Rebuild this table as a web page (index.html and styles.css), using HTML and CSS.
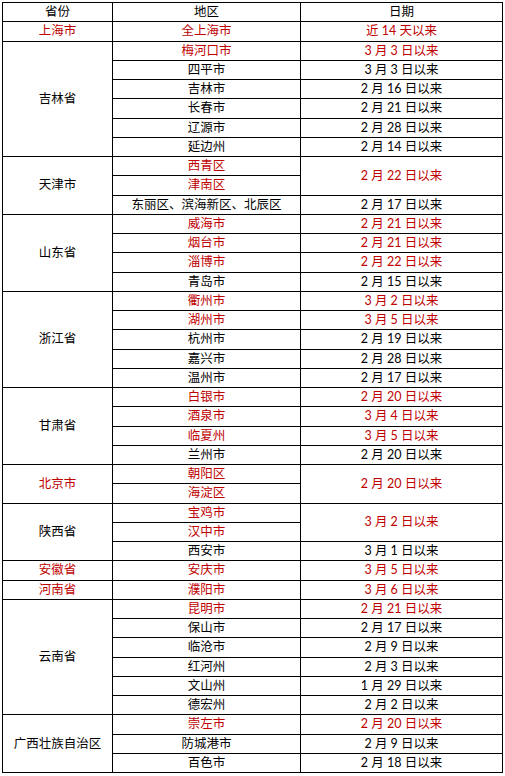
FILE: index.html
```html
<!DOCTYPE html>
<html lang="zh">
<head>
<meta charset="utf-8">
<link rel="stylesheet" href="styles.css">
</head>
<body>
<table class="grid">
<colgroup><col class="c1"><col class="c2"><col class="c3"></colgroup>
<tr><td>省份</td><td>地区</td><td>日期</td></tr>
<tr class="r"><td>上海市</td><td>全上海市</td><td>近 14 天以来</td></tr>
<tr><td rowspan="6">吉林省</td><td class="r">梅河口市</td><td class="r">3 月 3 日以来</td></tr>
<tr><td>四平市</td><td>3 月 3 日以来</td></tr>
<tr><td>吉林市</td><td>2 月 16 日以来</td></tr>
<tr><td>长春市</td><td>2 月 21 日以来</td></tr>
<tr><td>辽源市</td><td>2 月 28 日以来</td></tr>
<tr><td>延边州</td><td>2 月 14 日以来</td></tr>
<tr><td rowspan="3">天津市</td><td class="r">西青区</td><td class="r" rowspan="2">2 月 22 日以来</td></tr>
<tr><td class="r">津南区</td></tr>
<tr><td>东丽区、滨海新区、北辰区</td><td>2 月 17 日以来</td></tr>
<tr><td rowspan="4">山东省</td><td class="r">威海市</td><td class="r">2 月 21 日以来</td></tr>
<tr><td class="r">烟台市</td><td class="r">2 月 21 日以来</td></tr>
<tr><td class="r">淄博市</td><td class="r">2 月 22 日以来</td></tr>
<tr><td>青岛市</td><td>2 月 15 日以来</td></tr>
<tr><td rowspan="5">浙江省</td><td class="r">衢州市</td><td class="r">3 月 2 日以来</td></tr>
<tr><td class="r">湖州市</td><td class="r">3 月 5 日以来</td></tr>
<tr><td>杭州市</td><td>2 月 19 日以来</td></tr>
<tr><td>嘉兴市</td><td>2 月 28 日以来</td></tr>
<tr><td>温州市</td><td>2 月 17 日以来</td></tr>
<tr><td rowspan="4">甘肃省</td><td class="r">白银市</td><td class="r">2 月 20 日以来</td></tr>
<tr><td class="r">酒泉市</td><td class="r">3 月 4 日以来</td></tr>
<tr><td class="r">临夏州</td><td class="r">3 月 5 日以来</td></tr>
<tr><td>兰州市</td><td>2 月 20 日以来</td></tr>
<tr class="r"><td rowspan="2">北京市</td><td>朝阳区</td><td rowspan="2">2 月 20 日以来</td></tr>
<tr class="r"><td>海淀区</td></tr>
<tr><td rowspan="3">陕西省</td><td class="r">宝鸡市</td><td class="r" rowspan="2">3 月 2 日以来</td></tr>
<tr><td class="r">汉中市</td></tr>
<tr><td>西安市</td><td>3 月 1 日以来</td></tr>
<tr class="r"><td>安徽省</td><td>安庆市</td><td>3 月 5 日以来</td></tr>
<tr class="r"><td>河南省</td><td>濮阳市</td><td>3 月 6 日以来</td></tr>
<tr><td rowspan="6">云南省</td><td class="r">昆明市</td><td class="r">2 月 21 日以来</td></tr>
<tr><td>保山市</td><td>2 月 17 日以来</td></tr>
<tr><td>临沧市</td><td>2 月 9 日以来</td></tr>
<tr><td>红河州</td><td>2 月 3 日以来</td></tr>
<tr><td>文山州</td><td>1 月 29 日以来</td></tr>
<tr><td>德宏州</td><td>2 月 2 日以来</td></tr>
<tr><td rowspan="3">广西壮族自治区</td><td class="r">崇左市</td><td class="r">2 月 20 日以来</td></tr>
<tr><td>防城港市</td><td>2 月 9 日以来</td></tr>
<tr><td>百色市</td><td>2 月 18 日以来</td></tr>
</table>
</body>
</html>
```
FILE: styles.css
```css
html, body {
  margin: 0;
  padding: 0;
  background: #ffffff;
}
body {
  padding: 2px;
  font-family: Lato, "Noto Sans CJK SC", sans-serif;
  font-size: 12.5px;
  color: #000000;
}
.grid {
  border-collapse: collapse;
  table-layout: fixed;
  width: 500px;
}
.c1 { width: 110px; }
.c2 { width: 188px; }
.c3 { width: 202px; }
.grid tr {
  height: 19.25px;
}
.grid td {
  border: 1px solid #000000;
  padding: 0;
  text-align: center;
  vertical-align: middle;
  line-height: 14px;
  white-space: nowrap;
}
.r, .r td {
  color: #c00000;
}
```
